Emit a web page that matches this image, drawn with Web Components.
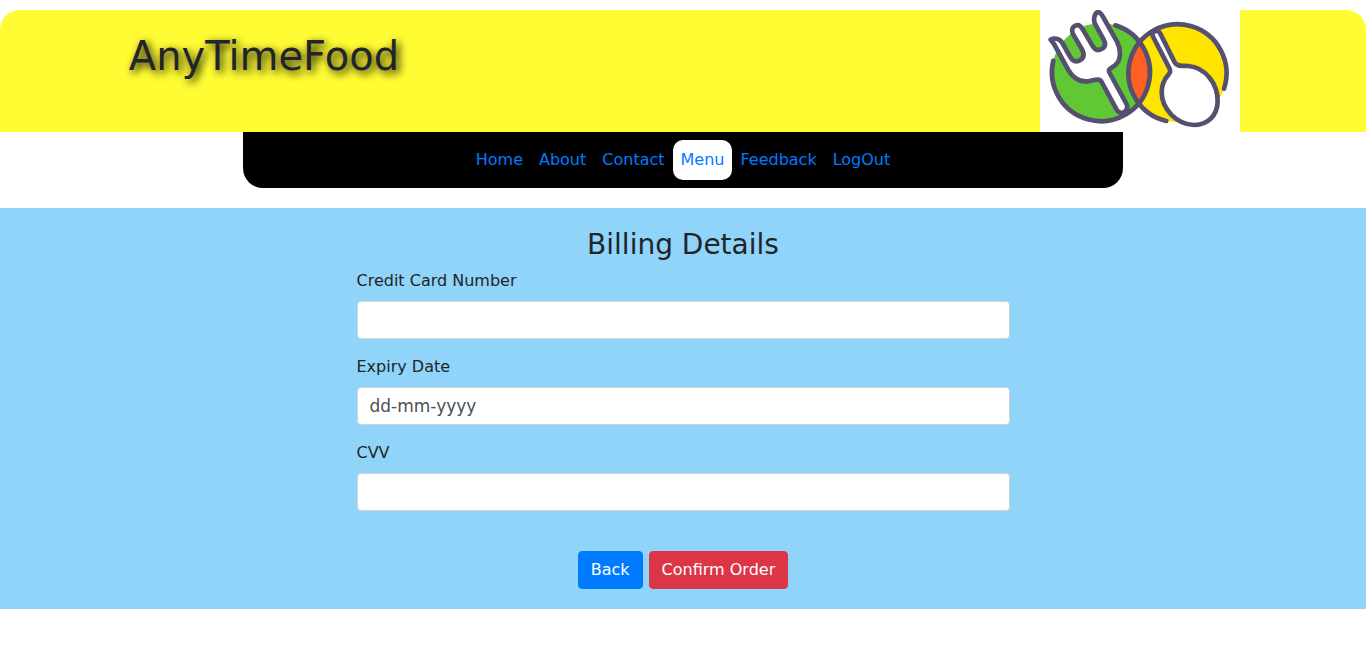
<!DOCTYPE html>
<html lang="en">
<head>
<meta charset="utf-8">
<meta name="viewport" content="width=device-width, initial-scale=1">
<title>AnyTimeFood - Billing</title>
<style>
  body {
    margin: 0;
    background: #fff;
    color: #212529;
    font: 16px/24px Verdana, "DejaVu Sans", sans-serif;
    --blue: #007bff;
    --red: #dc3545;
  }
</style>
</head>
<body>
<food-header>AnyTimeFood</food-header>
<food-nav>
  <nav-item href="#home">Home</nav-item>
  <nav-item href="#about">About</nav-item>
  <nav-item href="#contact">Contact</nav-item>
  <nav-item href="#menu" active>Menu</nav-item>
  <nav-item href="#feedback">Feedback</nav-item>
  <nav-item href="#logout">LogOut</nav-item>
</food-nav>
<billing-panel>
  <span slot="title">Billing Details</span>
  <form-field label="Credit Card Number"></form-field>
  <form-field label="Expiry Date" placeholder="dd-mm-yyyy"></form-field>
  <form-field label="CVV"></form-field>
  <action-button slot="actions">Back</action-button>
  <action-button slot="actions" danger>Confirm Order</action-button>
</billing-panel>

<script>
const define = (name, html, setup) => {
  const template = document.createElement('template');
  template.innerHTML = html;
  customElements.define(name, class extends HTMLElement {
    constructor() {
      super();
      this.attachShadow({ mode: 'open' }).append(template.content.cloneNode(true));
    }
    connectedCallback() { if (setup) setup(this, this.shadowRoot); }
  });
};

define('food-logo', `
<style>
  :host { display: block; width: 200px; background: #fff; }
  svg { display: block; width: 100%; height: auto; }
</style>
<svg viewBox="30 30 600 366" role="img" aria-label="Fork and spoon" fill="none" stroke="#554f70" stroke-width="14" stroke-linecap="round" stroke-linejoin="round">
  <defs><clipPath id="left"><circle cx="213" cy="217" r="147"/></clipPath></defs>
  <g stroke="none">
    <circle cx="213" cy="217" r="147" fill="#5fc834"/>
    <circle cx="443" cy="219" r="147" fill="#ffe400"/>
    <circle cx="443" cy="219" r="147" fill="#ff5f22" clip-path="url(#left)"/>
  </g>
  <path d="M70 182A147 147 0 1 0 256 76"/>
  <path d="M582 266A147 147 0 1 0 409 363"/>
  <path fill="#fff" d="M62 119C72 114 88 114 97 129L119 168C127 184 139 188 151 180C163 173 163 163 157 150L130 104C124 93 126 81 136 77C148 72 154 81 160 91L187 137C194 149 204 153 215 147C226 141 228 132 221 119L196 73C188 58 194 38 205 36C213 38 217 46 221 54L261 125C274 150 273 181 256 195C244 205 232 206 239 219L289 311C295 322 290 333 281 337C272 341 264 336 260 329L215 246C208 233 192 241 173 244C145 247 125 228 115 210L72 132Q65 123 62 119Z"/>
  <path fill="#fff" d="M368 108C363 95 382 87 390 99L434 187C441 200 455 197 475 198C525 202 564 250 563 305C562 347 532 376 492 375C440 373 396 328 395 278C395 252 403 237 416 223C426 213 417 204 411 191Z"/>
</svg>`);

define('food-header', `
<style>
  :host { display: grid; grid-template-columns: 1fr 8fr 3fr; margin-top: 10px; background: #fffc33; border-radius: 20px 20px 0 0; }
  h1 { grid-column: 2; margin: 0; padding: 22px 15px 0; font-size: 40px; line-height: 48px; font-weight: 400; text-shadow: 3px 3px 8px #000; }
  food-logo { margin-left: 15px; }
</style>
<h1><slot></slot></h1>
<food-logo></food-logo>`);

define('nav-item', `
<style>
  :host { display: block; }
  a { display: block; padding: 8px; border-radius: 10px; color: var(--blue); text-decoration: none; }
  :host([active]) a { background: #fff; }
</style>
<a><slot></slot></a>`, (host, root) => {
  root.querySelector('a').href = host.getAttribute('href');
});

define('food-nav', `
<style>
  :host { display: block; }
  nav { display: flex; justify-content: center; flex-wrap: wrap; box-sizing: border-box; max-width: 880px; margin: 0 auto 20px; padding: 8px; background: #000; border-radius: 0 0 20px 20px; }
</style>
<nav><slot></slot></nav>`);

define('form-field', `
<style>
  :host { display: block; margin-bottom: 16px; }
  label { display: block; margin-bottom: 8px; }
  input { display: block; box-sizing: border-box; width: 100%; height: 38px; margin: 0; padding: 6px 12px; border: 1px solid #ced4da; border-radius: 4px; background: #fff; color: #495057; font: inherit; font-size: 17px; }
  input::placeholder { color: #495057; opacity: 1; }
</style>
<label for="control"></label>
<input id="control" type="text">`, (host, root) => {
  root.querySelector('label').textContent = host.getAttribute('label');
  root.querySelector('input').placeholder = host.getAttribute('placeholder') || '';
});

define('action-button', `
<style>
  :host { display: block; }
  button { display: block; margin: 0; padding: 6px 12px; border: 1px solid var(--blue); border-radius: 4px; background: var(--blue); color: #fff; font: inherit; cursor: pointer; }
  :host([danger]) button { background: var(--red); border-color: var(--red); }
</style>
<button type="button"><slot></slot></button>`);

define('billing-panel', `
<style>
  :host { display: block; padding: 20px 0; background: #90d4f9; }
  h2 { margin: 0 0 8px; font-size: 28px; line-height: 33px; font-weight: 400; text-align: center; }
  form { box-sizing: border-box; width: 50%; margin: 0 auto; padding: 0 15px; }
  .actions { display: flex; justify-content: center; gap: 6px; padding-top: 24px; }
</style>
<h2><slot name="title"></slot></h2>
<form>
  <slot></slot>
  <div class="actions"><slot name="actions"></slot></div>
</form>`);
</script>
</body>
</html>
